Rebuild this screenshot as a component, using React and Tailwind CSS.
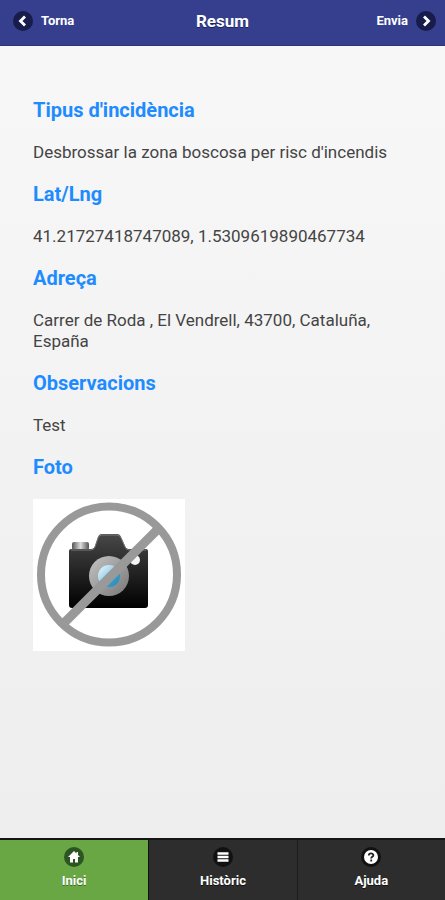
// Resum page: incident summary before sending it
const camps = [
  { titol: "Tipus d'incidència", valor: "Desbrossar la zona boscosa per risc d'incendis" },
  { titol: 'Lat/Lng',            valor: '41.21727418747089, 1.5309619890467734' },
  { titol: 'Adreça',             valor: 'Carrer de Roda , El Vendrell, 43700, Cataluña, España' },
  { titol: 'Observacions',       valor: 'Test' },
];

function IconaCercle({ children, className }) {
  return (
    <span className={`flex size-5 shrink-0 items-center justify-center rounded-full ${className}`}>
      <svg width="14" height="14" viewBox="0 0 14 14" aria-hidden="true">{children}</svg>
    </span>
  );
}

// Placeholder shown when the incident has no photo
function SenseFoto() {
  return (
    <svg viewBox="0 0 152 152" className="block size-[152px] bg-white" role="img" aria-label="Sense foto">
      <defs>
        <linearGradient id="cos" x1="0" y1="0" x2="0" y2="1">
          <stop offset="0" stopColor="#484848" />
          <stop offset="0.5" stopColor="#242424" />
          <stop offset="1" stopColor="#000" />
        </linearGradient>
        <linearGradient id="boto" x1="0" y1="0" x2="1" y2="0">
          <stop offset="0" stopColor="#555" />
          <stop offset="0.5" stopColor="#ddd" />
          <stop offset="1" stopColor="#555" />
        </linearGradient>
        <linearGradient id="anell" x1="0" y1="0" x2="1" y2="1">
          <stop offset="0" stopColor="#c4c4c4" />
          <stop offset="1" stopColor="#777" />
        </linearGradient>
        <linearGradient id="lent" x1="0" y1="0" x2="1" y2="1">
          <stop offset="0" stopColor="#f0f9fd" />
          <stop offset="0.4" stopColor="#a6d7ed" />
          <stop offset="0.6" stopColor="#35a0d0" />
          <stop offset="1" stopColor="#2585b8" />
        </linearGradient>
      </defs>
      <rect x="39" y="43" width="17" height="8" rx="2" fill="url(#boto)" />
      <path d="M38 50H58Q61 50 62 47L65 38Q66 35 69 35H84Q87 35 88 38L92 47Q93 50 96 50H113Q115 50 115 52V106Q115 109 112 109H39Q36 109 36 106V52Q36 50 38 50Z" fill="url(#cos)" />
      <path d="M38 51H58Q61 51 62 48L65 39Q66 36 69 36H84Q87 36 88 39L92 48Q93 51 96 51H113" fill="none" stroke="#777" strokeWidth="1" />
      <circle cx="102" cy="61" r="5" fill="#f5f5f5" />
      <circle cx="76" cy="77" r="20" fill="url(#anell)" />
      <circle cx="76" cy="77" r="11" fill="url(#lent)" />
      <path d="M31 124L125 30" stroke="#999" strokeWidth="9" />
      <circle cx="76" cy="75.5" r="68" fill="none" stroke="#999" strokeWidth="8" />
    </svg>
  );
}

export default function App() {
  return (
    <div className="flex min-h-screen flex-col bg-linear-to-b from-[#f8f8f8] to-[#ededed] font-['Roboto','Liberation_Sans',sans-serif] text-[#444]">

      <header className="grid h-[46px] grid-cols-[1fr_auto_1fr] items-center border-b border-[#29347f] bg-[#353f8d] px-[13px] pb-1 font-bold text-white text-shadow-[0_1px_0_#1c2257]">
        <button type="button" className="flex items-center gap-2 justify-self-start text-[13px] leading-5">
          <IconaCercle className="bg-[#171c4b]">
            <path d="M9 2.5L4.5 7L9 11.5" fill="none" stroke="#fff" strokeWidth="2.8" />
          </IconaCercle>
          Torna
        </button>
        <h1 className="text-[17px] leading-5">Resum</h1>
        <button type="button" className="-mr-1 flex items-center gap-2 justify-self-end text-[13px] leading-5">
          Envia
          <IconaCercle className="bg-[#171c4b]">
            <path d="M5 2.5L9.5 7L5 11.5" fill="none" stroke="#fff" strokeWidth="2.8" />
          </IconaCercle>
        </button>
      </header>

      <main className="flex-1 px-[33px] pt-[54px] pb-8">
        {camps.map(({ titol, valor }) => (
          <section key={titol}>
            <h2 className="mb-[21px] text-[20px] leading-[21px] font-bold text-[#1e8cff]">{titol}</h2>
            <p className="mb-[21px] text-[17px] leading-[21px]">{valor}</p>
          </section>
        ))}
        <section>
          <h2 className="mb-[21px] text-[20px] leading-[21px] font-bold text-[#1e8cff]">Foto</h2>
          <SenseFoto />
        </section>
      </main>

      <nav className="grid grid-cols-3 border-t-2 border-[#151515] bg-[#2d2d2d] text-[13px] leading-4 font-bold text-white text-shadow-[0_1px_0_#111]">
        <a href="#inici" className="flex h-[60px] flex-col items-center gap-[6px] bg-[#68a744] pt-[7px] text-shadow-[0_1px_0_#3c6a26]">
          <IconaCercle className="bg-[#2d5522]">
            <path d="M7 1L1 7H3V12.5H6V9H8V12.5H11V7H13L11 5V2H9.5V3.5Z" fill="#fff" />
          </IconaCercle>
          Inici
        </a>
        <a href="#historic" className="flex h-[60px] flex-col items-center gap-[6px] border-l border-[#111] pt-[7px]">
          <IconaCercle className="bg-[#111]">
            <path d="M1.5 3.5H12.5M1.5 7H12.5M1.5 10.5H12.5" stroke="#fff" strokeWidth="2.6" />
          </IconaCercle>
          Històric
        </a>
        <a href="#ajuda" className="flex h-[60px] flex-col items-center gap-[6px] border-l border-[#1c1c1c] pt-[7px]">
          <IconaCercle className="bg-[#111]">
            <circle cx="7" cy="7" r="7" fill="#fff" />
            <path d="M4.8 5.5C4.8 2.8 9.4 2.8 9.4 5.3C9.4 6.9 7.2 6.8 7.2 8.4M7.2 9.6V11.4" fill="none" stroke="#222" strokeWidth="1.8" />
          </IconaCercle>
          Ajuda
        </a>
      </nav>
    </div>
  );
}
